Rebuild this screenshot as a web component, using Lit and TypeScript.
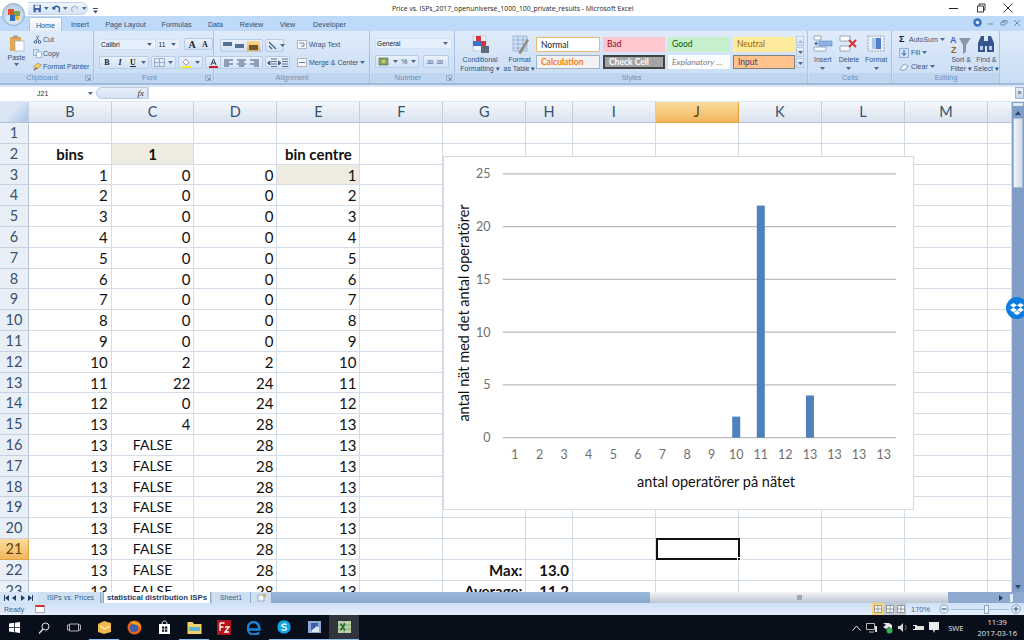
import { LitElement, html, css, svg } from 'lit'
import { customElement } from 'lit/decorators.js'

const icon = (w: number, h: number, body: unknown) =>
    html`<svg class="ico" width=${w} height=${h} viewBox="0 0 ${w} ${h}">${body}</svg>`

const arrow = html`<svg class="ico" width="5" height="3" viewBox="0 0 5 3"><path d="M0 0h5L2.5 3z" fill="#4c6a91" /></svg>`

const launcher = icon(6, 6, svg`<path d="M.5.5h5v5h-5z" fill="none" stroke="#7f9cc0" stroke-width=".7"/><path d="M2 2l2.5 2.5M4.5 3v1.5H3" stroke="#5a7aa3" stroke-width=".7" fill="none"/>`)

const lines = (kind: 'l' | 'c' | 'r') => {
    const rows = [0, 1, 2, 3].map(n => {
        const len = n % 2 ? 5 : 9
        const x = kind === 'l' ? 1 : kind === 'c' ? (11 - len) / 2 : 10 - len
        return svg`<rect x=${x} y=${1.5 + n * 2} width=${len} height="1" fill="#3f5878"/>`
    })
    return icon(11, 10, rows)
}

@customElement('xl-title')
class XlTitle extends LitElement {
    static styles = css`
        :host {
            display: flex;
            align-items: center;
            height: 16px;
            background: #fff;
            position: relative;
            font-family: 'Open Sans', sans-serif;
        }
        .qat {
            display: flex;
            align-items: center;
            gap: 3px;
            margin-left: 28px;
            height: 13px;
            width: 60px;
            padding-left: 5px;
            box-sizing: border-box;
            border: 1px solid #c3d5ec;
            border-left: none;
            border-radius: 0 8px 8px 0;
            background: linear-gradient(#f0f5fc, #d5e3f5);
        }
        .custom {
            margin-left: 5px;
        }
        .name {
            position: absolute;
            left: 392px;
            top: 3px;
            font-size: 6.8px;
            line-height: 12px;
            color: #1c1c1c;
            white-space: nowrap;
        }
        .win {
            margin-left: auto;
            display: flex;
            gap: 17px;
            padding-right: 11px;
        }
    `
    render() {
        return html`
            <div class="qat">
                ${icon(9, 9, svg`<path d="M.5.5h8v8h-8z" fill="#3d5fa8"/><path d="M2 1h5v3H2z" fill="#e8eef8"/><path d="M3 6h3v2.5H3z" fill="#dfe6f2"/>`)}
                ${arrow}
                ${icon(9, 9, svg`<path d="M2 5C2 2 6 1 8 4c.6 1.5.3 3-.8 4" fill="none" stroke="#27508f" stroke-width="1.6"/><path d="M.5 2l4 3.5H.5z" fill="#27508f"/>`)}
                ${arrow}
                ${icon(9, 9, svg`<path d="M7 5C7 2 3 1 1 4 .4 5.5.7 7 1.8 8" fill="none" stroke="#a9b7cb" stroke-width="1.4"/>`)}
                ${arrow}
            </div>
            <div class="custom">${icon(5, 6, svg`<path d="M0 0h5v1H0zM0 2.5h5L2.5 5.5z" fill="#3c5577"/>`)}</div>
            <div class="name">Price vs. ISPs_2017_openuniverse_1000_100_private_results - Microsoft Excel</div>
            <div class="win">
                ${icon(10, 10, svg`<path d="M0 5.5h9" stroke="#222" stroke-width="1"/>`)}
                ${icon(10, 10, svg`<path d="M1.5 3h6v6h-6zM3 3V1h6v6H7.5" fill="none" stroke="#222" stroke-width=".9"/>`)}
                ${icon(10, 10, svg`<path d="M.5.5l9 9M9.5.5l-9 9" stroke="#222" stroke-width=".9"/>`)}
            </div>
        `
    }
}

@customElement('xl-tabs')
class XlTabs extends LitElement {
    static styles = css`
        :host {
            display: flex;
            height: 15px;
            background: #bfd9f8;
            font-family: 'Liberation Sans', sans-serif;
            font-size: 7.2px;
            color: #2f5079;
            padding-left: 29px;
            align-items: flex-end;
            position: relative;
        }
        .tab {
            height: 14px;
            line-height: 15px;
            text-align: center;
        }
        .on {
            background: linear-gradient(#fdfeff, #e3eefb);
            border: 1px solid #a9c4e6;
            border-bottom: none;
            border-radius: 2px 2px 0 0;
            box-sizing: border-box;
        }
        .right {
            position: absolute;
            right: 3px;
            top: 2px;
            display: flex;
            gap: 5px;
            align-items: center;
        }
    `
    render() {
        const tabs: [string, number][] = [
            ['Insert', 36],
            ['Page Layout', 55],
            ['Formulas', 47],
            ['Data', 31],
            ['Review', 41],
            ['View', 31],
            ['Developer', 53],
        ]
        return html`
            <div class="tab on" style="width:33px">Home</div>
            ${tabs.map(([t, w]) => html`<div class="tab" style="width:${w}px">${t}</div>`)}
            <div class="right">
                ${icon(9, 9, svg`<circle cx="4.5" cy="4.5" r="4.2" fill="#3a70c0"/><circle cx="4.5" cy="4.5" r="1.8" fill="#dbe8fb"/>`)}
                ${icon(8, 8, svg`<path d="M1 5h5" stroke="#6b8bb3"/>`)}
                ${icon(8, 8, svg`<path d="M1 3h4v3H1zM3 3V1.5h4v3" fill="none" stroke="#6b8bb3"/>`)}
                ${icon(8, 8, svg`<path d="M1 1l6 6M7 1L1 7" stroke="#6b8bb3"/>`)}
            </div>
        `
    }
}

@customElement('xl-ribbon')
class XlRibbon extends LitElement {
    static styles = css`
        :host {
            display: flex;
            height: 54px;
            box-sizing: border-box;
            border-bottom: 2px solid #9fbbdc;
            background: linear-gradient(#dfebfa, #c8dcf4);
            font-family: 'Liberation Sans', sans-serif;
            font-size: 7px;
            color: #34527a;
            white-space: nowrap;
        }
        .group {
            display: flex;
            flex-direction: column;
            box-sizing: border-box;
            border-right: 1px solid #a9c4e6;
            margin-right: 1px;
        }
        .body {
            flex: 1;
            display: flex;
            min-height: 0;
        }
        .label {
            height: 10px;
            line-height: 10px;
            text-align: center;
            color: #6d8fb8;
            background: #c0d6f0;
            position: relative;
            font-size: 7.4px;
        }
        .label.pad {
            padding-right: 9px;
        }
        .label svg {
            position: absolute;
            right: 2px;
            top: 2px;
        }
        .ico {
            flex: none;
            display: block;
        }
        .col {
            display: flex;
            flex-direction: column;
        }
        .row {
            display: flex;
            align-items: center;
        }
        .big {
            display: flex;
            flex-direction: column;
            align-items: center;
            line-height: 9px;
            text-align: center;
        }
        /* clipboard */
        .paste {
            width: 33px;
            padding-top: 4px;
            gap: 1px;
        }
        .clip {
            padding-top: 4px;
            gap: 4.5px;
        }
        .clip .row {
            gap: 1px;
            height: 9px;
        }
        /* font */
        .stack {
            padding: 7px 0 0 4px;
            gap: 6px;
        }
        .combo {
            height: 11px;
            box-sizing: border-box;
            background: #e6f0fc;
            border: 1px solid #d3e2f5;
            line-height: 9px;
            padding-left: 1px;
            display: flex;
            align-items: center;
            justify-content: space-between;
            padding-right: 3px;
            font-size: 6.6px;
            color: #222;
        }
        .btns {
            height: 13px;
            box-sizing: border-box;
            border: 1px solid #b7cce8;
            border-radius: 2px;
            background: linear-gradient(#e9f1fb, #d2e1f5);
            display: flex;
            align-items: center;
            gap: 3px;
            padding: 0 2px;
        }
        .bi {
            font-family: 'Liberation Serif', serif;
            font-weight: 700;
            font-size: 8px;
            color: #222;
            width: 10px;
            text-align: center;
        }
        .hot {
            background: linear-gradient(#fbd98f, #f3ab4a);
        }
        .align {
            padding: 8px 0 0 5px;
            gap: 4px;
        }
        .wrap {
            padding: 8px 0 0 7px;
            gap: 7px;
        }
        .wrap .row {
            gap: 2px;
            height: 11px;
        }
        /* styles */
        .gallery {
            display: grid;
            grid-template-columns: 64px 62px 62px 62px;
            grid-template-rows: 15px 14px;
            gap: 3px;
            margin: 6px 0 0 1px;
            font-family: Lato, sans-serif;
            font-size: 8.5px;
        }
        .st {
            box-sizing: border-box;
            line-height: 14px;
            padding-left: 4px;
            overflow: hidden;
        }
        .normal {
            background: #fff;
            border: 1px solid #e8b96f;
            color: #222;
        }
        .bad {
            background: #ffc7ce;
            color: #9c0006;
        }
        .good {
            background: #c6efce;
            color: #006100;
        }
        .neutral {
            background: #ffeb9c;
            color: #9c6500;
        }
        .calc {
            background: #f2f2f2;
            border: 1px solid #a3b2c4;
            color: #fa7d00;
            font-weight: 700;
            line-height: 12px;
        }
        .check {
            background: #a5a5a5;
            border: 2px solid #444;
            color: #fff;
            font-weight: 700;
            line-height: 10px;
        }
        .expl {
            background: #fbfcfe;
            color: #7f7f7f;
            font-style: italic;
        }
        .input {
            background: #ffc28a;
            border: 1px solid #7f7f7f;
            color: #3f3f76;
            line-height: 12px;
        }
        .spin {
            margin: 5px 0 0 1px;
            width: 8px;
            gap: 1px;
        }
        .spin div {
            height: 10px;
            background: linear-gradient(#e8f0fb, #cfdff3);
            border: 1px solid #b7cce8;
            box-sizing: border-box;
            display: flex;
            align-items: center;
            justify-content: center;
        }
        .cmd {
            padding-top: 3px;
            gap: 1px;
        }
        .cells {
            justify-content: center;
            gap: 6px;
        }
        .cells .cmd {
            padding-top: 4px;
            gap: 3px;
        }
        .edit {
            padding: 3px 0 0 6px;
            gap: 3.5px;
            width: 52px;
        }
        .edit .row {
            gap: 2px;
            height: 10px;
        }
        .sigma {
            font-weight: 700;
            font-size: 9px;
            color: #222;
            width: 8px;
        }
    `

    render() {
        return html`
            <div class="group" style="width:94px">
                <div class="body">
                    <div class="big paste">
                        ${icon(18, 17, svg`<path d="M2 2h11v14H2z" fill="#e5a84f"/><path d="M5 .5h5v3H5z" fill="#9aa3ad"/><path d="M7 6h9v10H7z" fill="#fbfcff" stroke="#9fb2c9" stroke-width=".7"/>`)}
                        <span>Paste</span>
                        ${arrow}
                    </div>
                    <div class="col clip">
                        <div class="row">
                            ${icon(9, 9, svg`<path d="M3 .5l3 5.5M6 .5L3 6" stroke="#667" stroke-width=".8"/><circle cx="2.5" cy="7" r="1.3" fill="none" stroke="#3e5f92"/><circle cx="6.5" cy="7" r="1.3" fill="none" stroke="#3e5f92"/>`)}
                            <span>Cut</span>
                        </div>
                        <div class="row">
                            ${icon(9, 9, svg`<path d="M.5.5h5v6h-5z" fill="#d8e6f6" stroke="#6f8fb8" stroke-width=".6"/><path d="M3.5 3h5v5.5h-5z" fill="#fff" stroke="#6f8fb8" stroke-width=".6"/>`)}
                            <span>Copy</span>
                        </div>
                        <div class="row">
                            ${icon(9, 9, svg`<path d="M.5 5l4-4 4 2-4 4z" fill="#f2ca5c" stroke="#91783a" stroke-width=".5"/><path d="M1 8l3-2" stroke="#6d5a3a" stroke-width="1.2"/>`)}
                            <span>Format Painter</span>
                        </div>
                    </div>
                </div>
                <div class="label pad">Clipboard${launcher}</div>
            </div>

            <div class="group" style="width:119px">
                <div class="body col stack">
                    <div class="row" style="gap:1px">
                        <div class="combo" style="width:58px">Calibri ${arrow}</div>
                        <div class="combo" style="width:24px">11 ${arrow}</div>
                        <div class="btns" style="margin-left:3px;height:12px">
                            <span class="bi" style="font-size:10px">A</span><span class="bi" style="font-size:8px">A</span>
                        </div>
                    </div>
                    <div class="row" style="gap:2px">
                        <div class="btns">
                            <span class="bi">B</span><span class="bi" style="font-style:italic">I</span
                            ><span class="bi" style="text-decoration:underline">U</span>${arrow}
                        </div>
                        <div class="btns">
                            ${icon(11, 9, svg`<path d="M.5.5h10v8H.5zM5.5.5v8M.5 4.5h10" fill="none" stroke="#8ba1bd" stroke-width=".8"/>`)}${arrow}
                        </div>
                        <div class="btns">
                            ${icon(11, 10, svg`<path d="M2 4l3-3 3 4-3 2z" fill="#fff" stroke="#666" stroke-width=".6"/><path d="M1 8h9v2H1z" fill="#f5ea2d"/>`)}${arrow}
                        </div>
                        <div class="btns">
                            ${icon(11, 10, svg`<path d="M3 7l2.5-6L8 7M4 5h3" fill="none" stroke="#2f3a55" stroke-width="1"/><path d="M1 8h9v2H1z" fill="#d9181b"/>`)}${arrow}
                        </div>
                    </div>
                </div>
                <div class="label pad">Font${launcher}</div>
            </div>

            <div class="group" style="width:155px">
                <div class="body">
                    <div class="col align">
                        <div class="row" style="gap:2px">
                            <div class="btns" style="width:43px;padding:0;gap:0;justify-content:space-around">
                                ${icon(9, 7, svg`<path d="M0 0h9v4H0z" fill="#56708f"/>`)}
                                ${icon(9, 7, svg`<path d="M0 2h9v4H0z" fill="#56708f"/>`)}
                                <span class="hot" style="display:block;padding:1px 2px">${icon(9, 8, svg`<path d="M0 3h9v5H0z" fill="#6b5b3a"/>`)}</span>
                            </div>
                            <div class="btns" style="width:19px">${icon(9, 9, svg`<path d="M1 1l7 7M1 5l3 3" stroke="#4b5f7b" stroke-width="1.2"/>`)}${arrow}</div>
                        </div>
                        <div class="row" style="gap:2px">
                            <div class="btns" style="width:43px;padding:0;gap:2px;justify-content:center">${lines('l')}${lines('c')}${lines('r')}</div>
                            <div class="btns" style="width:25px;padding:0;gap:1px;justify-content:center">
                                ${icon(10, 10, svg`<path d="M4 1h6M4 3.5h6M4 6h6M4 8.5h6M3 3L.5 5 3 7z" stroke="#3f5878" fill="#3f5878" stroke-width=".8"/>`)}
                                ${icon(10, 10, svg`<path d="M4 1h6M4 3.5h6M4 6h6M4 8.5h6M.5 3L3 5 .5 7z" stroke="#3f5878" fill="#3f5878" stroke-width=".8"/>`)}
                            </div>
                        </div>
                    </div>
                    <div class="col wrap">
                        <div class="row">
                            ${icon(10, 9, svg`<path d="M.5.5h9v8h-9z" fill="#f7f9fc" stroke="#8d8d8d" stroke-width=".6"/><path d="M2 3h5v3H4" stroke="#3c6bb0" fill="none" stroke-width=".8"/>`)}
                            <span>Wrap Text</span>
                        </div>
                        <div class="row">
                            ${icon(10, 9, svg`<path d="M.5.5h9v8h-9z" fill="#f7f9fc" stroke="#8d8d8d" stroke-width=".6"/><path d="M2 4.5h6" stroke="#3c6bb0" stroke-width=".9"/>`)}
                            <span>Merge &amp; Center</span>
                            ${arrow}
                        </div>
                    </div>
                </div>
                <div class="label">Alignment</div>
            </div>

            <div class="group" style="width:84px">
                <div class="body col stack" style="gap:6px">
                    <div class="combo" style="width:77px">General ${arrow}</div>
                    <div class="row" style="gap:4px">
                        <div class="btns" style="width:44px;justify-content:space-between">
                            ${icon(11, 9, svg`<path d="M1 1h9v7H1z" fill="#7fa872" stroke="#44683e" stroke-width=".6"/><circle cx="5.5" cy="4.5" r="1.8" fill="#e5c64f"/>`)}${arrow}<span>%</span>${arrow}
                        </div>
                        <div class="btns" style="width:26px">
                            <span style="font-size:6px;letter-spacing:-.5px">.00</span><span style="font-size:6px;letter-spacing:-.5px">.00</span>
                        </div>
                    </div>
                </div>
                <div class="label pad">Number${launcher}</div>
            </div>

            <div class="group" style="width:352px">
                <div class="body">
                    <div class="big cmd" style="width:48px">
                        ${icon(20, 20, svg`<path d="M3 2h13v15H3z" fill="#eef3fa" stroke="#aab9cc" stroke-width=".6"/><path d="M6 2h5v5H6z" fill="#d8343a"/><path d="M3 7h8v5H3z" fill="#3f70c4"/><path d="M11 7h5v5h-5z" fill="#d8343a"/><path d="M11 12h8v7h-8z" fill="#5f6a78"/>`)}
                        <span>Conditional<br />Formatting ▾</span>
                    </div>
                    <div class="big cmd" style="width:31px">
                        ${icon(20, 20, svg`<path d="M3 2h14v15H3z" fill="#cfe0f6" stroke="#7f9cc4" stroke-width=".6"/><path d="M3 6h14M3 10h14M3 14h14M8 2v15M13 2v15" stroke="#7f9cc4" stroke-width=".6"/><path d="M8 19l9-14 2 1-8 14z" fill="#8f8f7f"/>`)}
                        <span>Format<br />as Table ▾</span>
                    </div>
                    <div class="gallery">
                        <div class="st normal">Normal</div>
                        <div class="st bad">Bad</div>
                        <div class="st good">Good</div>
                        <div class="st neutral">Neutral</div>
                        <div class="st calc">Calculation</div>
                        <div class="st check">Check Cell</div>
                        <div class="st expl">Explanatory ...</div>
                        <div class="st input">Input</div>
                    </div>
                    <div class="col spin">
                        <div>${icon(5, 3, svg`<path d="M0 3h5L2.5 0z" fill="#a9bdd8"/>`)}</div>
                        <div>${arrow}</div>
                        <div>${arrow}</div>
                    </div>
                </div>
                <div class="label">Styles</div>
            </div>

            <div class="group" style="width:83px">
                <div class="body cells">
                    <div class="big cmd">
                        ${icon(20, 17, svg`<path d="M1 1h7v4H1zM1 12h12v4H1z" fill="#f8fafd" stroke="#7f8a99" stroke-width=".7"/><path d="M6 6h13v5H6z" fill="#8fb2e4" stroke="#5c83bd" stroke-width=".6"/><path d="M2 8.500h3M2 8.500l2-2M2 8.500l2 2" stroke="#2d4f86"/>`)}
                        <span>Insert</span>${arrow}
                    </div>
                    <div class="big cmd">
                        ${icon(20, 17, svg`<path d="M1 1h10v5H1zM1 11h10v5H1z" fill="#f8fafd" stroke="#7f8a99" stroke-width=".7"/><path d="M10 5l7 7M17 5l-7 7" stroke="#d9322c" stroke-width="2"/>`)}
                        <span>Delete</span>${arrow}
                    </div>
                    <div class="big cmd">
                        ${icon(20, 17, svg`<path d="M2 1h16v15H2z" fill="#e9f0fa" stroke="#7f8a99" stroke-width=".7" stroke-dasharray="2 1"/><path d="M6 3h9v11H6z" fill="#a9c5eb"/><path d="M10 3h5v11h-5z" fill="#4f7fc7"/>`)}
                        <span>Format</span>${arrow}
                    </div>
                </div>
                <div class="label">Cells</div>
            </div>

            <div class="group" style="width:107px">
                <div class="body">
                    <div class="col edit">
                        <div class="row"><span class="sigma">Σ</span><span>AutoSum</span>${arrow}</div>
                        <div class="row">
                            ${icon(10, 10, svg`<path d="M.5.5h9v9h-9z" fill="#cfe0f7" stroke="#6b8fc4" stroke-width=".6"/><path d="M5 2v5M3 5l2 2.5L7 5" stroke="#2f5fae" fill="none"/>`)}
                            <span>Fill</span>${arrow}
                        </div>
                        <div class="row">
                            ${icon(10, 9, svg`<path d="M1 7l4-5 4 2-3 4H2z" fill="#f4f7fb" stroke="#5d7fae" stroke-width=".7"/>`)}
                            <span>Clear</span>${arrow}
                        </div>
                    </div>
                    <div class="big cmd" style="width:26px">
                        ${icon(22, 20, svg`<path d="M9 4h12l-5 7v7l-3 2v-9z" fill="#8b97a8"/><text x="0" y="9" font-size="9" font-weight="700" fill="#3a66b4">A</text><text x="1" y="19" font-size="9" font-weight="700" fill="#a5602a">Z</text>`)}
                        <span>Sort &amp;<br />Filter ▾</span>
                    </div>
                    <div class="big cmd" style="width:26px">
                        ${icon(20, 20, svg`<path d="M2 9l3-7h3v5h4V2h3l3 7v9h-7v-6H9v6H2z" fill="#35568f"/><path d="M4 12h3v4H4zM13 12h3v4h-3z" fill="#b9cdea"/>`)}
                        <span>Find &amp;<br />Select ▾</span>
                    </div>
                </div>
                <div class="label">Editing</div>
            </div>
        `
    }
}

@customElement('xl-formula')
class XlFormula extends LitElement {
    static styles = css`
        :host {
            display: flex;
            height: 12px;
            border-top: 2px solid #dbe7f5;
            padding-bottom: 2px;
            background: #fff;
            border-bottom: 1px solid #a9c1de;
            font-family: 'Liberation Sans', sans-serif;
            font-size: 7px;
            color: #2b2b2b;
            position: relative;
        }
        .name {
            width: 96px;
            display: flex;
            align-items: center;
            box-sizing: border-box;
            padding-left: 37px;
            justify-content: space-between;
            padding-right: 3px;
        }
        .fx {
            width: 52px;
            height: 12px;
            box-sizing: border-box;
            border: 1px solid #b8cbe3;
            border-radius: 7px 0 0 7px;
            background: linear-gradient(#e8f0fa, #d3e1f2);
            font-family: 'Liberation Serif', serif;
            font-style: italic;
            font-size: 9px;
            text-align: right;
            padding-right: 3px;
            line-height: 10px;
        }
        .in {
            flex: 1;
            border-left: 1px solid #c4d4e8;
        }
        .more {
            width: 9px;
            background: linear-gradient(#e2ecf8, #c3d6ed);
            border: 1px solid #9fb7d4;
            box-sizing: border-box;
            height: 12px;
            font-size: 7px;
            line-height: 9px;
            text-align: center;
        }
        .band {
            position: absolute;
            left: 0;
            right: 0;
            bottom: -2px;
            height: 2px;
            background: #dbe7f5;
        }
    `
    render() {
        return html`
            <div class="name">J21 ${arrow}</div>
            <div class="fx">fx</div>
            <div class="in"></div>
            <div class="more">»</div>
            <div class="band"></div>
        `
    }
}

@customElement('xl-chart')
class XlChart extends LitElement {
    static styles = css`
        :host {
            display: block;
            position: absolute;
            left: 443px;
            top: 54px;
            width: 471px;
            height: 354px;
        }
        svg {
            display: block;
            font-family: Lato, sans-serif;
        }
    `
    render() {
        const x0 = 502.7
        const step = 24.58
        const yOf = (v: number) => 437.7 - v * 10.55
        const cats = [1, 2, 3, 4, 5, 6, 7, 8, 9, 10, 11, 12, 13, 13, 13, 13]
        const bars: [number, number][] = [
            [9, 2],
            [10, 22],
            [12, 4],
        ]
        return html`
            <svg width="471" height="354" viewBox="443 156 471 354">
                <rect x="443.5" y="156.5" width="470" height="353" fill="#fff" stroke="#d9d9d9" />
                ${[0, 5, 10, 15, 20, 25].map(
                    v => svg`
                        <line x1="502.7" x2="896" y1=${yOf(v)} y2=${yOf(v)} stroke="#bdbdbd" stroke-width="1.2" />
                        <text x="490.5" y=${yOf(v) + 4.5} text-anchor="end" font-size="12.5" fill="#6f6f6f">${v}</text>
                    `
                )}
                ${bars.map(
                    ([i, v]) => svg`<rect x=${x0 + (i + 0.5) * step - 4} y=${yOf(v)} width="8" height=${v * 10.55} fill="#4f81bd" />`
                )}
                ${cats.map(
                    (c, i) => svg`<text x=${x0 + (i + 0.5) * step} y="458.5" text-anchor="middle" font-size="12.5" fill="#6f6f6f">${c}</text>`
                )}
                <text x="716" y="487" text-anchor="middle" font-size="14.5" fill="#111">antal operatörer på nätet</text>
                <text transform="translate(469 313) rotate(-90)" text-anchor="middle" font-size="14.5" fill="#111">antal nät med det antal operatörer</text>
            </svg>
        `
    }
}

@customElement('xl-sheet')
class XlSheet extends LitElement {
    static styles = css`
        :host {
            display: block;
            position: relative;
            flex: 1;
            overflow: hidden;
            height: 490px;
            background: #fff;
            font-family: Lato, sans-serif;
            font-size: 15px;
            color: #111;
        }
        .grid {
            display: grid;
            grid-template-columns: 29px 82.7px 82.7px 83px 83px 83px 83px 46.5px 83px 83px 83px 83px 83px 1fr;
            grid-template-rows: 21px;
            grid-auto-rows: 20.8px;
        }
        .c {
            box-sizing: border-box;
            border-right: 1px solid #d4dce8;
            border-bottom: 1px solid #d4dce8;
            padding-right: 3px;
            text-align: right;
            line-height: 20px;
            white-space: nowrap;
            overflow: visible;
        }
        .mid {
            text-align: center;
            padding: 0;
        }
        .flag {
            font-size: 14px;
        }
        .b {
            font-weight: 700;
        }
        .tint {
            background: #eeece1;
        }
        .head {
            box-sizing: border-box;
            text-align: center;
            color: #39506f;
            font-size: 14.5px;
            line-height: 20px;
            border-right: 1px solid #c3cede;
            border-bottom: 1px solid #b3c2d6;
            background: linear-gradient(#f4f7fb, #d9e3ef);
        }
        .rh {
            background: #e9eff7;
            line-height: 20px;
            border-right: 1px solid #b3c2d6;
            border-bottom: 1px solid #c6d2e2;
        }
        .sel {
            background: linear-gradient(#fbdc9c, #f2b55f);
            border-color: #e0a23f;
            color: #5b4310;
        }
        .corner {
            background: linear-gradient(135deg, #dbe6f4 45%, #a9c4e8);
            position: relative;
        }
        .cursor {
            position: absolute;
            left: 656px;
            top: 436px;
            width: 84px;
            height: 22px;
            box-sizing: border-box;
            border: 2px solid #111;
        }
        .cursor::after {
            content: '';
            position: absolute;
            right: -3px;
            bottom: -3px;
            width: 4px;
            height: 4px;
            background: #111;
            border: 1px solid #fff;
            box-sizing: border-box;
        }
    `
    render() {
        const cols = ['B', 'C', 'D', 'E', 'F', 'G', 'H', 'I', 'J', 'K', 'L', 'M', '']
        const rows = Array.from({ length: 22 }, (_, i) => i + 2)
        const binOf = (r: number) => Math.min(r - 2, 13)
        const freq: Record<number, number> = { 12: 2, 13: 22, 15: 4 }
        const cum = (r: number) => (r < 12 ? 0 : r === 12 ? 2 : r < 15 ? 24 : 28)
        const cell = (r: number, col: string) => {
            if (r === 2) {
                if (col === 'B') return html`<div class="c mid b">bins</div>`
                if (col === 'C') return html`<div class="c mid b tint">1</div>`
                if (col === 'E') return html`<div class="c mid b">bin centre</div>`
                return html`<div class="c"></div>`
            }
            if (col === 'B') return html`<div class="c">${binOf(r)}</div>`
            if (col === 'C') {
                return r >= 16 ? html`<div class="c mid flag">FALSE</div>` : html`<div class="c">${freq[r] ?? 0}</div>`
            }
            if (col === 'D') return html`<div class="c">${cum(r)}</div>`
            if (col === 'E') return html`<div class="c ${r === 3 ? 'tint' : ''}">${binOf(r)}</div>`
            if (col === 'G' && r === 22) return html`<div class="c b">Max:</div>`
            if (col === 'G' && r === 23) return html`<div class="c b">Average:</div>`
            if (col === 'H' && r === 22) return html`<div class="c b">13.0</div>`
            if (col === 'H' && r === 23) return html`<div class="c b">11.2</div>`
            return html`<div class="c"></div>`
        }
        return html`
            <div class="grid">
                <div class="head corner"></div>
                ${cols.map(c => html`<div class="head ${c === 'J' ? 'sel' : ''}">${c}</div>`)}
                <div class="head rh">1</div>
                ${cols.map(() => html`<div class="c"></div>`)}
                ${rows.map(
                    r => html`
                        <div class="head rh ${r === 21 ? 'sel' : ''}">${r}</div>
                        ${cols.map(c => cell(r, c))}
                    `
                )}
            </div>
            <xl-chart></xl-chart>
            <div class="cursor"></div>
        `
    }
}

@customElement('xl-vscroll')
class XlVscroll extends LitElement {
    static styles = css`
        :host {
            display: flex;
            flex-direction: column;
            width: 12px;
            background: #7f9dc7;
            box-sizing: border-box;
            position: relative;
        }
        .split {
            height: 5px;
            background: #dfe8f4;
            border: 1px solid #7f9dc7;
            box-sizing: border-box;
        }
        .up {
            height: 11px;
            display: flex;
            align-items: center;
            justify-content: center;
        }
        .thumb {
            height: 70px;
            margin: 0 1px;
            background: linear-gradient(90deg, #f2f5fa, #cfd8e6);
            border: 1px solid #a8bad2;
            box-sizing: border-box;
        }
        .down {
            margin-top: auto;
            height: 10px;
            display: flex;
            align-items: center;
            justify-content: center;
        }
    `
    render() {
        return html`
            <div class="split"></div>
            <div class="up">${icon(6, 4, svg`<path d="M0 4h6L3 0z" fill="#2c4670"/>`)}</div>
            <div class="thumb"></div>
            <div class="down">${icon(6, 4, svg`<path d="M0 0h6L3 4z" fill="#2c4670"/>`)}</div>
        `
    }
}

@customElement('xl-sheetbar')
class XlSheetbar extends LitElement {
    static styles = css`
        :host {
            display: flex;
            height: 11px;
            background: linear-gradient(#bdd3ec, #a6c1e2);
            font-family: 'Liberation Sans', sans-serif;
            font-size: 7px;
            color: #3e5f8a;
            align-items: stretch;
            white-space: nowrap;
        }
        .nav {
            width: 38px;
            display: flex;
            align-items: center;
            gap: 3px;
            padding-left: 4px;
            box-sizing: border-box;
            background: #d6e4f5;
        }
        .tab {
            box-sizing: border-box;
            background: #cfdff2;
            line-height: 11px;
            text-align: center;
            border-right: 1px solid #8fabcd;
        }
        .on {
            background: #fff;
            font-weight: 700;
            color: #23406b;
            font-size: 7.8px;
            margin-left: 2px;
            border-left: 1px solid #8fabcd;
        }
        .new {
            display: flex;
            align-items: center;
            justify-content: center;
        }
        .track {
            width: 378px;
            background: linear-gradient(#9db8da, #88a6ce);
        }
        .thumb {
            width: 298px;
            background: linear-gradient(#f3f5f8, #bcc5d1);
            display: flex;
            align-items: center;
            justify-content: center;
        }
        .grip {
            width: 5px;
            height: 5px;
            background: #9aa8ba;
        }
        .end {
            flex: 1;
            background: #8ea9cf;
            display: flex;
            align-items: center;
            justify-content: flex-end;
            gap: 7px;
            padding-right: 11px;
        }
        .box {
            width: 3px;
            height: 8px;
            background: #e6edf6;
        }
    `
    render() {
        const tri = (d: string) => icon(5, 6, svg`<path d=${d} fill="#1f3a63"/>`)
        return html`
            <div class="nav">
                ${tri('M0 0h1v6H0zM5 0v6L1 3z')} ${tri('M4 0v6L0 3z')} ${tri('M1 0v6l4-3z')} ${tri('M4 0h1v6H4zM0 0v6l4-3z')}
            </div>
            <div class="tab" style="width:63px;padding-left:3px">ISPs vs. Prices</div>
            <div class="tab on" style="width:108px">statistical distribution ISPs</div>
            <div class="tab" style="width:39px;margin-left:1px">Sheet1</div>
            <div class="tab new" style="width:21px">
                ${icon(9, 8, svg`<path d="M1 1h6v6H1z" fill="#f5f8fc" stroke="#8a8f98" stroke-width=".7"/><path d="M6 0h3v3H6z" fill="#e2b13c"/>`)}
            </div>
            <div class="track"></div>
            <div class="thumb"><span class="grip"></span></div>
            <div class="end">${icon(4, 6, svg`<path d="M0 0v6l4-3z" fill="#1f3a63"/>`)}<span class="box"></span></div>
        `
    }
}

@customElement('xl-status')
class XlStatus extends LitElement {
    static styles = css`
        :host {
            display: flex;
            align-items: center;
            height: 12px;
            background: linear-gradient(#cfe1f7, #e3eefb);
            font-family: 'Liberation Sans', sans-serif;
            font-size: 7px;
            color: #3e5f8a;
            padding-left: 4px;
        }
        .macro {
            margin-left: 11px;
        }
        .views {
            margin-left: auto;
            display: flex;
            height: 12px;
            align-items: center;
            background: #bfc9d6;
        }
        .v {
            width: 11px;
            height: 12px;
            display: flex;
            align-items: center;
            justify-content: center;
        }
        .v.cur {
            width: 12px;
            background: #f6d777;
        }
        .pct {
            margin: 0 9px 0 5px;
            font-size: 7.4px;
        }
        .zoom {
            display: flex;
            align-items: center;
            margin-right: 3px;
        }
        .bar {
            position: relative;
            width: 58px;
            height: 1px;
            margin: 0 2px;
            background: #a9bdd6;
        }
        .knob {
            position: absolute;
            left: 33px;
            top: -4px;
            width: 5px;
            height: 9px;
            box-sizing: border-box;
            background: #eef3fa;
            border: 1px solid #8ea6c6;
        }
    `
    render() {
        const cells = icon(8, 8, svg`<path d="M.5.5h7v7h-7zM.5 4h7M4 .5v7" fill="#f6f8fb" stroke="#6b6b6b" stroke-width=".6"/>`)
        const zoomBtn = (plus: boolean) =>
            icon(10, 10, svg`<circle cx="5" cy="5" r="4.3" fill="#e5edf8" stroke="#8ea6c6"/><path d=${plus ? 'M2.5 5h5M5 2.5v5' : 'M2.5 5h5'} stroke="#3e5f8a" stroke-width="1.2"/>`)
        return html`
            <span>Ready</span>
            <span class="macro">${icon(10, 9, svg`<path d="M.5 1.5h9v7h-9z" fill="#fbfcfe" stroke="#8a8f98" stroke-width=".7"/><path d="M.5 1h9v2h-9z" fill="#c33"/>`)}</span>
            <div class="views">
                <div class="v cur">${cells}</div>
                <div class="v">${cells}</div>
                <div class="v">${cells}</div>
            </div>
            <span class="pct">170%</span>
            <div class="zoom">${zoomBtn(false)}<div class="bar"><div class="knob"></div></div>${zoomBtn(true)}</div>
        `
    }
}

@customElement('win-taskbar')
class WinTaskbar extends LitElement {
    static styles = css`
        :host {
            display: flex;
            height: 25px;
            background: #090e1b;
            font-family: 'Open Sans', sans-serif;
            color: #e4e6ea;
            font-size: 7.5px;
            align-items: stretch;
        }
        .t {
            width: 30px;
            box-sizing: border-box;
            display: flex;
            align-items: center;
            justify-content: center;
        }
        .first {
            width: 29px;
        }
        .run {
            border-bottom: 1px solid #8fc3ee;
        }
        .active {
            background: #30343d;
            border-bottom: 1px solid #8fc3ee;
        }
        .tray {
            margin-left: auto;
            display: flex;
            align-items: center;
            gap: 5px;
            padding-right: 7px;
        }
        .lang {
            margin: 0 9px 0 4px;
        }
        .clock {
            text-align: center;
            line-height: 11px;
            font-size: 7.6px;
        }
    `
    render() {
        return html`
            <div class="t first">${icon(11, 11, svg`<path d="M0 1.5l5-.7v4.400H0zM5.800.7L11 0v5.200H5.800zM0 5.900h5v4.300l-5-.7zM5.800 5.900H11V11l-5.200-.7z" fill="#fff"/>`)}</div>
            <div class="t">${icon(12, 12, svg`<circle cx="7.5" cy="4.5" r="3.5" fill="none" stroke="#e9e9e9"/><path d="M5 7l-4 4.5" stroke="#e9e9e9" stroke-width="1.2"/>`)}</div>
            <div class="t">${icon(14, 9, svg`<path d="M2.5 1h9v7h-9zM2.500 2H.5v5h2M11.500 2h2v5h-2" fill="none" stroke="#dcdcdc" stroke-width=".8"/>`)}</div>
            <div class="t run">${icon(15, 13, svg`<path d="M1 3l6-3 7 2v9l-7 2-6-2z" fill="#f0b84a"/><path d="M3 5l5 3 5-3" fill="none" stroke="#fff3c9" stroke-width="1.3"/>`)}</div>
            <div class="t">${icon(15, 15, svg`<circle cx="7.5" cy="7.5" r="7" fill="#e8601c"/><circle cx="7" cy="8" r="4" fill="#3a5fb0"/><path d="M3 2c5-2 11 1 11 7-1-3-4-5-7-4.500z" fill="#f7a823"/>`)}</div>
            <div class="t">${icon(13, 15, svg`<path d="M1 4h11v10H1z" fill="#fff"/><path d="M4 4c0-4 5-4 5 0" fill="none" stroke="#fff"/><path d="M4 6.500h2.300v2.300H4zM7 6.500h2.300v2.300H7zM4 9.500h2.300v2.300H4zM7 9.500h2.300v2.300H7z" fill="#101522"/>`)}</div>
            <div class="t run">${icon(15, 13, svg`<path d="M.5 1h5l1.500 2h7.500v10H.5z" fill="#f3d069"/><path d="M2 6h11v4H2z" fill="#5bb4d8"/>`)}</div>
            <div class="t">${icon(14, 15, svg`<path d="M0 0h14v15H0z" fill="#b31217"/><path d="M3 3h4.500M3 3v8M3 7h3.500M8 7h4l-4 5h4" fill="none" stroke="#fff" stroke-width="1.3"/>`)}</div>
            <div class="t">${icon(14, 14, svg`<path d="M1.500 8.500h11C12.500 2 8 .8 6 1 2.500 1.500.5 4.500 1 8.500c.3 3.500 3.500 5 6 5 2 0 4-.7 5-2" fill="none" stroke="#1b84d8" stroke-width="2.4"/>`)}</div>
            <div class="t run">${icon(14, 14, svg`<circle cx="7" cy="7" r="6.7" fill="#12a5e8"/><path d="M9.500 4.800C8 3.500 4.800 3.800 4.800 5.500s4.700 1.300 4.700 3.300-3.500 2-5 .8" fill="none" stroke="#fff" stroke-width="1.3"/>`)}</div>
            <div class="t run">${icon(15, 14, svg`<path d="M1 1h13v12H1z" fill="#8ea8d8"/><path d="M4 3h7v7H4z" fill="#3d5fa8"/><path d="M5 10l5-4 2 2v4H5z" fill="#dfe7f5"/>`)}</div>
            <div class="t active">${icon(15, 14, svg`<path d="M1 1h13v12H1z" fill="#b9d0a8"/><path d="M1 5h13M1 9h13M7 1v12" stroke="#5d8a4e" stroke-width=".6"/><path d="M3.500 3.500l4.500 7M8 3.500l-4.500 7" stroke="#1c6b32" stroke-width="1.4"/>`)}</div>
            <div class="tray">
                ${icon(9, 6, svg`<path d="M.5 5.500L4.500 1l4 4.500" fill="none" stroke="#e9e9e9"/>`)}
                ${icon(11, 10, svg`<path d="M.5.5h8v6h-8zM3 9h5" fill="none" stroke="#e1e1e1" stroke-width=".8"/><path d="M9 3h2v6H9z" fill="#e1e1e1"/>`)}
                ${icon(11, 12, svg`<path d="M1 1l3 2-3 2 3 2 3-2 3 2 0-4-3-2z" fill="#e7e7e7"/><circle cx="7.5" cy="8.5" r="3" fill="#38b24a"/>`)}
                ${icon(10, 9, svg`<path d="M0 3h2l3-3v9L2 6H0z" fill="#d7d7d7"/><path d="M7 2c1.500 1.500 1.500 3.500 0 5" stroke="#8a8a8a" fill="none"/>`)}
                ${icon(11, 8, svg`<path d="M2 2h9v4H2z" fill="#e1e1e1"/><path d="M0 1h4v1H0zM0 5h4v1H0z" fill="#e1e1e1"/>`)}
                ${icon(10, 11, svg`<path d="M0 0h10v8H6l-1 3-1-3H0z" fill="#ececec"/>`)}
                <span class="lang">SWE</span>
                <div class="clock">11:39<br />2017-03-16</div>
            </div>
        `
    }
}

@customElement('app-root')
export class AppRoot extends LitElement {
    static styles = css`
        :host {
            display: block;
            width: 1024px;
            height: 640px;
            overflow: hidden;
            position: relative;
            background: #c9dcf3;
        }
        .work {
            display: flex;
        }
        .dropbox {
            position: absolute;
            right: -4px;
            top: 297px;
            width: 22px;
            height: 22px;
            border-radius: 50%;
            background: #0d7be0;
            display: flex;
            align-items: center;
            justify-content: center;
        }
        .orb {
            position: absolute;
            left: 2px;
            top: 3px;
            width: 23px;
            height: 23px;
            box-sizing: border-box;
            border-radius: 50%;
            border: 1px solid #8ea9c9;
            background: radial-gradient(circle at 50% 70%, #e9f2fb, #a9c0dc);
            display: flex;
            align-items: center;
            justify-content: center;
        }
    `
    render() {
        return html`
            <xl-title></xl-title>
            <xl-tabs></xl-tabs>
            <xl-ribbon></xl-ribbon>
            <xl-formula></xl-formula>
            <div class="work">
                <xl-sheet></xl-sheet>
                <xl-vscroll></xl-vscroll>
            </div>
            <xl-sheetbar></xl-sheetbar>
            <xl-status></xl-status>
            <win-taskbar></win-taskbar>
            <div class="orb">
                ${icon(14, 14, svg`<path d="M1 1h6v6H1z" fill="#d9552b"/><path d="M7 3h6v5H7z" fill="#7da547"/><path d="M3 7h5v6H3z" fill="#2f6fc1"/><path d="M8 8h4v4H8z" fill="#efb92e"/>`)}
            </div>
            <div class="dropbox">
                ${icon(14, 13, svg`<path d="M3.5 1L7 3.3 3.5 5.600 0 3.300zM10.500 1L14 3.300l-3.500 2.300L7 3.300zM3.500 5.600L7 7.900l-3.500 2.300L0 7.900zM10.500 5.600L14 7.900l-3.500 2.300L7 7.900zM3.500 10.900L7 8.600l3.500 2.300L7 13z" fill="#fff"/>`)}
            </div>
        `
    }
}
